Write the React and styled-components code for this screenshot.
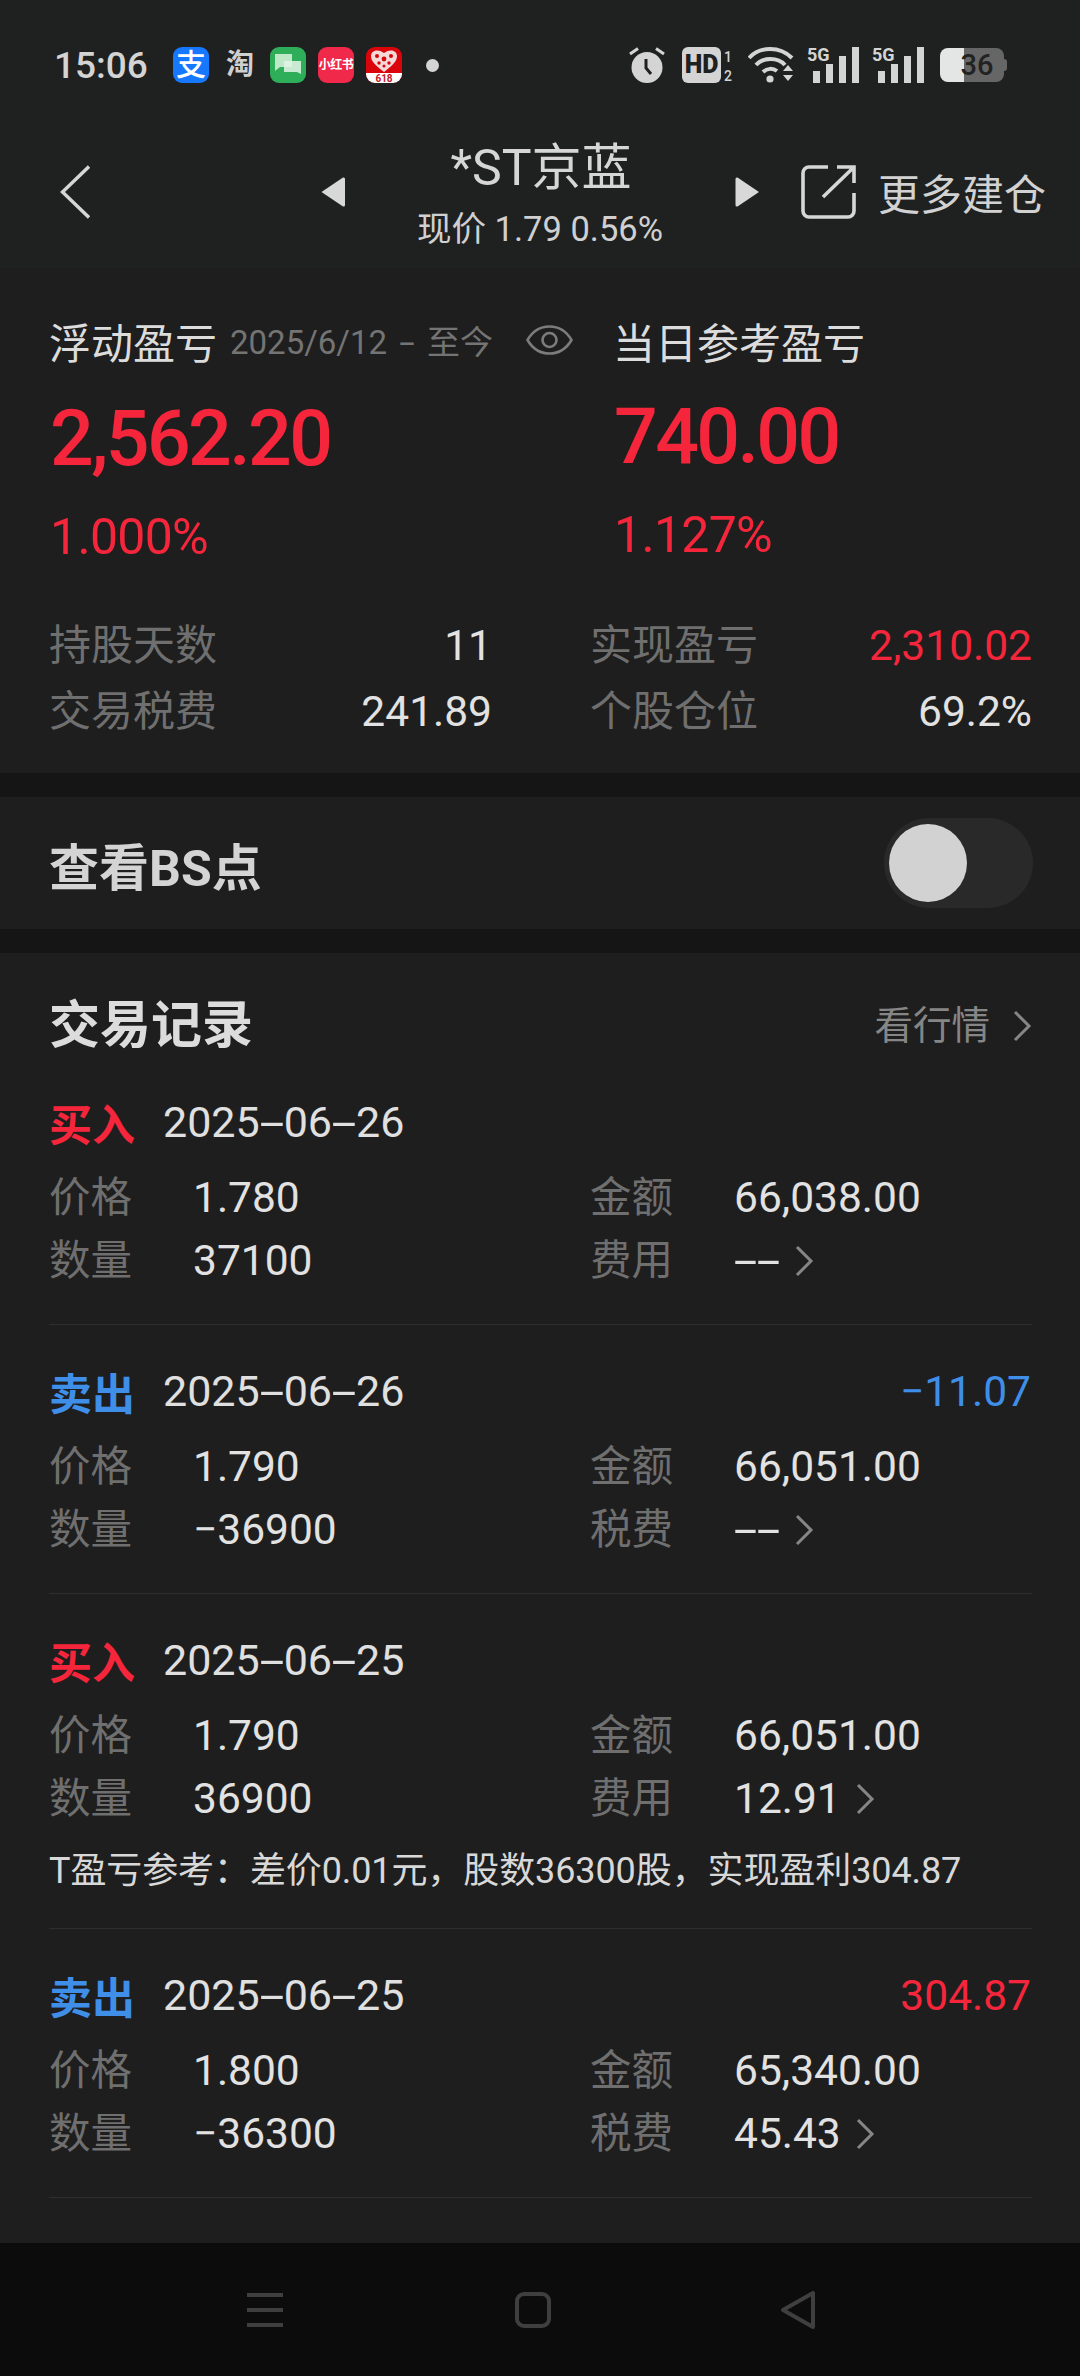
import React from "react";
import styled, { createGlobalStyle } from "styled-components";

const Global = createGlobalStyle`
  html, body { margin: 0; padding: 0; background: #151515; }
  * { box-sizing: border-box; }
`;
const FONT = `Roboto, "Noto Sans CJK SC", sans-serif`;
const RED = "#f5263b";
const BLUE = "#3f8ee8";

const Page = styled.div`
  width: 1080px; height: 2376px; display: flex; flex-direction: column;
  background: #151515; font-family: ${FONT}; color: #e0e0e0; overflow: hidden;
`;
const Top = styled.div`background: #1f2121;`;
const StatusBar = styled.div`
  height: 130px; display: flex; align-items: center; padding-left: 54px; position: relative;
`;
const Time = styled.span`font-size: 37px; font-weight: 500; color: #d4d4d4; width: 119px;`;
const AppIcon = styled.div`
  width: 36px; height: 36px; border-radius: 9px; background: ${p => p.$bg}; color: #fff;
  margin-right: 12px; display: flex; align-items: center; justify-content: center; overflow: hidden;
  font-size: ${p => p.$size || 28}px; line-height: 1; font-weight: 700; white-space: nowrap; flex: none;
`;
const AliGlyph = styled.span`font-size: 30px; line-height: 30px; font-weight: 500;`;
const Tiny = styled.span`display: inline-block; font-size: 12px; line-height: 14px; font-weight: 700; letter-spacing: -.5px;`;
const TaoGlyph = styled.span`font-size: 28px; font-weight: 700; color: #d0d0d0; width: 28px; margin: 0 16px 0 5px; line-height: 1;`;
const Dot = styled.span`width: 13px; height: 13px; border-radius: 50%; background: #d4d4d4; margin-left: 12px;`;
const StatusRight = styled.div`
  margin-left: auto; padding-right: 76px; display: flex; align-items: center; height: 36px;
`;
const SignalIcon = styled.svg`margin-left: 13px; overflow: visible;`;
const Battery = styled.div`
  width: 64px; height: 34px; border-radius: 8px; margin-left: 16px; position: relative;
  background: linear-gradient(90deg, #e4e6e5 0 24px, #666 24px 100%);
  color: #222; font-size: 29px; line-height: 34px; font-weight: 500; display: flex; align-items: center; justify-content: center;
  padding-left: 10px;
  &::after { content: ""; position: absolute; right: -3px; top: 11px; width: 3px; height: 12px; background: #666; border-radius: 0 3px 3px 0; }
`;
const Header = styled.div`
  height: 138px; display: flex; align-items: center; padding: 0 0 15px 60px;
`;
const BackSlot = styled.div`width: 261px; display: flex;`;
const Center = styled.div`
  width: 390px; display: flex; flex-direction: column; align-items: center; margin-top: 5px; color: #d6d6d6;
`;
const Title = styled.div`font-size: 50px; line-height: 56px; margin-left: 2px;`;
const Sub = styled.div`font-size: 34.5px; line-height: 40px; margin-top: 13px; color: #d0d0d0; white-space: nowrap;`;
const ShareSlot = styled.div`margin-left: 41px; display: flex;`;
const MoreText = styled.span`margin-left: 22px; font-size: 42px; color: #d2d2d2; white-space: nowrap;`;

const Hero = styled.section`
  height: 505px; background: #1e1e1e; padding: 47px 47px 0 49px;
`;
const HeroGrid = styled.div`display: grid; grid-template-columns: 564px 1fr;`;
const HeroCol = styled.div`display: flex; flex-direction: column;`;
const HeroHead = styled.div`display: flex; align-items: center; height: 50px; white-space: nowrap;`;
const HeroLabel = styled.span`font-size: 42px; color: #dcdcdc;`;
const HeroDate = styled.span`font-size: 33px; color: #747474; margin-left: 13px; width: 296px;`;
const Big = styled.div`
  font-size: 77px; line-height: 80px; letter-spacing: -2.6px; font-weight: 500; color: ${RED};
  margin-top: ${p => p.$raised ? 32 : 34}px; margin-left: 1px;
`;
const Pct = styled.div`
  font-size: 50px; line-height: 60px; letter-spacing: -.7px; color: ${RED}; margin-top: 28px; margin-left: 1px;
`;
const StatGrid = styled.div`
  display: grid; grid-template-columns: 443px 442px; column-gap: 98px; row-gap: 3px; margin-top: 47px;
`;
const Stat = styled.div`display: flex; justify-content: space-between; align-items: baseline; height: 63px; line-height: 63px;`;
const StatLabel = styled.span`font-size: 42px; color: #6f6f6f;`;
const StatValue = styled.span`font-size: 42.5px; color: ${p => p.$c || "#e2e2e2"};`;

const BsRow = styled.section`
  height: 132px; margin-top: 24px; background: #1e1e1e; display: flex; align-items: center;
  justify-content: space-between; padding: 0 47px 0 49px;
`;
const BsText = styled.span`font-size: 50px; font-weight: 700; color: #d4d4d4; padding-top: 2px;`;
const Toggle = styled.div`
  width: 149px; height: 90px; border-radius: 45px; background: #292929; display: flex; align-items: center; padding-left: 5px;
`;
const Knob = styled.div`width: 78px; height: 78px; border-radius: 50%; background: #d2d2d2;`;

const Card = styled.section`
  flex: 1; margin-top: 24px; background: #1e1e1e; padding: 0 48px 0 49px; overflow: hidden;
`;
const CardHead = styled.div`
  height: 103px; padding-top: 45px; display: flex; justify-content: space-between; align-items: flex-start;
`;
const CardTitle = styled.div`font-size: 51px; font-weight: 700; line-height: 56px; color: #dcdcdc;`;
const Link = styled.div`display: flex; align-items: center; font-size: 38.5px; line-height: 56px; color: #868686; gap: 8px;`;

const Item = styled.div`
  padding: 36px 0 32px; border-bottom: 1px solid #2e2e2e;
`;
const DateRow = styled.div`display: flex; align-items: center; height: 60px;`;
const Kind = styled.span`font-size: 43px; font-weight: 700; color: ${p => p.$c}; width: 114px;`;
const DateText = styled.span`font-size: 43px; color: #e0e0e0;`;
const Pnl = styled.span`margin-left: auto; font-size: 42.5px; color: ${p => p.$c}; margin-right: 1px;`;
const Lines = styled.div`
  display: grid; grid-template-columns: 541px 1fr; grid-auto-rows: 63px; margin-top: 14px;
`;
const Cell = styled.div`display: flex; align-items: baseline; line-height: 63px;`;
const CellLabel = styled.span`font-size: 41.5px; color: #6f6f6f; width: 144px;`;
const CellValue = styled.span`font-size: 42.5px; color: #e2e2e2;`;
const Chev = styled.svg`align-self: center; margin-left: 14px; flex: none;`;
const Dash = styled.span`
  display: inline-block; width: ${p => p.$w}px; text-align: center; margin: 0 ${p => p.$m || 0}px;
  transform: scaleX(${p => p.$s});
`;
const TNote = styled.div`font-size: 36px; line-height: 50px; color: #d8d8d8; margin-top: 16px; white-space: nowrap; letter-spacing: -.1px;`;

const Nav = styled.nav`
  height: 133px; background: #0c0c0c; flex: none; display: flex; align-items: center; padding-left: 247px;
`;
const NavHome = styled.svg`margin: 0 229px 0 232px;`;

const Chevron = ({ c = "#868686" }) => (
  <Chev width="20" height="32" viewBox="0 0 20 32" fill="none">
    <path d="M3 2 L17 16 L3 30" stroke={c} strokeWidth="3" />
  </Chev>
);

const Signal = () => (
  <SignalIcon width="52" height="36" viewBox="0 0 52 36" fill="#d4d4d4">
    <text x="0" y="14" fontSize="18" fontWeight="700" fontFamily="Roboto">5G</text>
    <rect x="6" y="24" width="7" height="12" />
    <rect x="19" y="17" width="7" height="19" />
    <rect x="32" y="9" width="7" height="27" />
    <rect x="45" y="0" width="7" height="36" />
  </SignalIcon>
);

const DateValue = ({ d }) => {
  const [y, m, day] = d.split("-");
  return (
    <DateText>
      {y}<Dash $w={24} $s={2.1}>-</Dash>{m}<Dash $w={24} $s={2.1}>-</Dash>{day}
    </DateText>
  );
};

const trades = [
  { k: "买入", c: RED, d: "2025-06-26", p: "1.780", a: "66,038.00", q: "37100", fl: "费用", f: "--" },
  { k: "卖出", c: BLUE, d: "2025-06-26", pnl: "−11.07", pc: BLUE, p: "1.790", a: "66,051.00", q: "−36900", fl: "税费", f: "--" },
  { k: "买入", c: RED, d: "2025-06-25", p: "1.790", a: "66,051.00", q: "36900", fl: "费用", f: "12.91", t: "T盈亏参考：差价0.01元，股数36300股，实现盈利304.87" },
  { k: "卖出", c: BLUE, d: "2025-06-25", pnl: "304.87", pc: RED, p: "1.800", a: "65,340.00", q: "−36300", fl: "税费", f: "45.43" },
];

export default function App() {
  return (
    <Page>
      <Global />
      <Top>
        <StatusBar>
          <Time>15:06</Time>
          <AppIcon $bg="#1677ff"><AliGlyph>支</AliGlyph></AppIcon>
          <TaoGlyph>淘</TaoGlyph>
          <AppIcon $bg="#2fae5a">
            <svg width="28" height="26" viewBox="0 0 28 26">
              <path d="M1 2h17v13H6l-5 4z" fill="#bfe8c9" />
              <path d="M10 9h17v13l-4-2H10z" fill="#e2f5e6" opacity=".85" />
            </svg>
          </AppIcon>
          <AppIcon $bg="#f0284a"><Tiny>小红书</Tiny></AppIcon>
          <AppIcon $bg="#d9050b">
            <svg width="36" height="36" viewBox="0 0 36 36">
              <path d="M18 25 C9 18 5 14 5 9 C5 4 11 1 18 6 C25 1 31 4 31 9 C31 14 27 18 18 25Z" fill="#f4d9d9" />
              <g fill="#d9050b">
                <circle cx="11" cy="9" r="2" /><circle cx="18" cy="12" r="2.4" /><circle cx="25" cy="9" r="2" />
                <circle cx="13" cy="16" r="1.7" /><circle cx="23" cy="16" r="1.7" /><circle cx="18" cy="19" r="1.5" />
              </g>
              <rect x="0" y="26" width="36" height="10" fill="#fff" />
              <text x="18" y="35" fontSize="10" fontWeight="700" fill="#c8161d" textAnchor="middle" fontFamily="Roboto">618</text>
            </svg>
          </AppIcon>
          <Dot />
          <StatusRight>
            <svg width="36" height="36" viewBox="0 0 36 36" style={{ marginRight: 17 }}>
              <circle cx="18" cy="20.5" r="15.5" fill="#d4d4d4" />
              <path d="M17 12v9l5 6" stroke="#1f2121" strokeWidth="3" fill="none" />
              <path d="M1 7l8-5.5M35 7l-8-5.5" stroke="#d4d4d4" strokeWidth="3" />
            </svg>
            <svg width="51" height="36" viewBox="0 0 51 36" style={{ marginRight: 15 }}>
              <rect x="0" y="0" width="39" height="36" rx="6" fill="#d4d4d4" />
              <text x="19.5" y="26" fontSize="25" fontWeight="900" textAnchor="middle" fill="#1f2121" fontFamily="Roboto">HD</text>
              <text x="46" y="15" fontSize="14" fontWeight="500" textAnchor="middle" fill="#d4d4d4" fontFamily="Roboto">1</text>
              <text x="46" y="34" fontSize="14" fontWeight="500" textAnchor="middle" fill="#d4d4d4" fontFamily="Roboto">2</text>
            </svg>
            <svg width="46" height="36" viewBox="0 0 46 36" fill="none">
              <path d="M1 11C12 -1 32 -1 44 11" stroke="#d4d4d4" strokeWidth="4" />
              <path d="M8 18C15 10 30 10 37 18" stroke="#d4d4d4" strokeWidth="4" />
              <path d="M15 25C19 21 25 21 29 24" stroke="#d4d4d4" strokeWidth="4" />
              <circle cx="22" cy="32" r="3.6" fill="#d4d4d4" />
              <path d="M35 24l5-6 5 6zM35 28l5 6 5-6z" fill="#d4d4d4" />
            </svg>
            <Signal />
            <Signal />
            <Battery>36</Battery>
          </StatusRight>
        </StatusBar>
        <Header>
          <BackSlot>
            <svg width="30" height="54" viewBox="0 0 30 54" fill="none">
              <path d="M29 1.5 L2.5 27 L29 52.5" stroke="#d6d6d6" strokeWidth="3.4" />
            </svg>
          </BackSlot>
          <svg width="24" height="30" viewBox="0 0 24 30"><path d="M0.5 15 L22 0.5 Q24 0 24 2 V28 Q24 30 22 29.5Z" fill="#d8d8d8" /></svg>
          <Center>
            <Title>*ST京蓝</Title>
            <Sub>现价 1.79 0.56%</Sub>
          </Center>
          <svg width="25" height="30" viewBox="0 0 24 30"><path d="M23.5 15 L2 0.5 Q0 0 0 2 V28 Q0 30 2 29.5Z" fill="#d8d8d8" /></svg>
          <ShareSlot>
            <svg width="55" height="54" viewBox="0 0 55 54" fill="none" stroke="#d6d6d6" strokeWidth="3.6">
              <path d="M27 2H8a6 6 0 0 0-6 6v38a6 6 0 0 0 6 6h39a6 6 0 0 0 6-6V28" />
              <path d="M22 32 L53 2 M36 2H53V18" />
            </svg>
          </ShareSlot>
          <MoreText>更多建仓</MoreText>
        </Header>
      </Top>

      <Hero>
        <HeroGrid>
          <HeroCol>
            <HeroHead>
              <HeroLabel>浮动盈亏</HeroLabel>
              <HeroDate>2025/6/12<Dash $w={18} $m={11} $s={1.7}>-</Dash>至今</HeroDate>
              <svg width="47" height="34" viewBox="0 0 47 34" fill="none" stroke="#7c7c7c" strokeWidth="2.6">
                <path d="M1.5 17C12 -1 35 -1 45.5 17C35 35 12 35 1.5 17Z" />
                <circle cx="23.5" cy="17" r="7" />
              </svg>
            </HeroHead>
            <Big>2,562.20</Big>
            <Pct>1.000%</Pct>
          </HeroCol>
          <HeroCol>
            <HeroHead><HeroLabel>当日参考盈亏</HeroLabel></HeroHead>
            <Big $raised>740.00</Big>
            <Pct>1.127%</Pct>
          </HeroCol>
        </HeroGrid>
        <StatGrid>
          <Stat><StatLabel>持股天数</StatLabel><StatValue>11</StatValue></Stat>
          <Stat><StatLabel>实现盈亏</StatLabel><StatValue $c={RED}>2,310.02</StatValue></Stat>
          <Stat><StatLabel>交易税费</StatLabel><StatValue>241.89</StatValue></Stat>
          <Stat><StatLabel>个股仓位</StatLabel><StatValue>69.2%</StatValue></Stat>
        </StatGrid>
      </Hero>

      <BsRow>
        <BsText>查看BS点</BsText>
        <Toggle><Knob /></Toggle>
      </BsRow>

      <Card>
        <CardHead>
          <CardTitle>交易记录</CardTitle>
          <Link>看行情<Chevron /></Link>
        </CardHead>
        {trades.map((t, i) => (
          <Item key={i}>
            <DateRow>
              <Kind $c={t.c}>{t.k}</Kind>
              <DateValue d={t.d} />
              {t.pnl && <Pnl $c={t.pc}>{t.pnl}</Pnl>}
            </DateRow>
            <Lines>
              <Cell><CellLabel>价格</CellLabel><CellValue>{t.p}</CellValue></Cell>
              <Cell><CellLabel>金额</CellLabel><CellValue>{t.a}</CellValue></Cell>
              <Cell><CellLabel>数量</CellLabel><CellValue>{t.q}</CellValue></Cell>
              <Cell>
                <CellLabel>{t.fl}</CellLabel>
                <CellValue>
                  {t.f === "--" ? <><Dash $w={23} $s={2}>-</Dash><Dash $w={23} $s={2}>-</Dash></> : t.f}
                </CellValue>
                <Chevron />
              </Cell>
            </Lines>
            {t.t && <TNote>{t.t}</TNote>}
          </Item>
        ))}
      </Card>

      <Nav>
        <svg width="36" height="36" viewBox="0 0 36 36" fill="#3f3f3f">
          <rect x="0" y="1" width="36" height="4" /><rect x="0" y="16" width="36" height="4" /><rect x="0" y="31" width="36" height="4" />
        </svg>
        <NavHome width="36" height="36" viewBox="0 0 36 36" fill="none" stroke="#3f3f3f" strokeWidth="4">
          <rect x="2" y="2" width="32" height="32" rx="7" />
        </NavHome>
        <svg width="36" height="40" viewBox="0 0 36 40" fill="none" stroke="#3f3f3f" strokeWidth="4" strokeLinejoin="round">
          <path d="M33 3 V37 L3 20Z" />
        </svg>
      </Nav>
    </Page>
  );
}
